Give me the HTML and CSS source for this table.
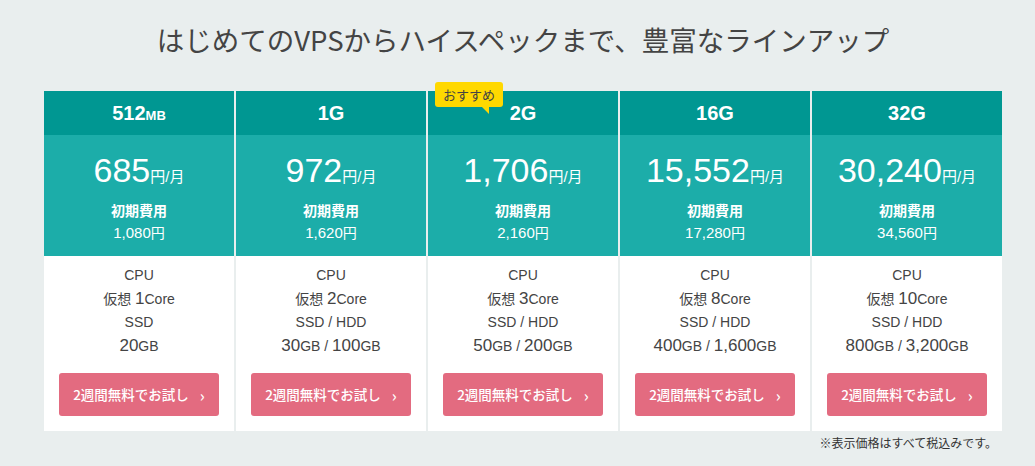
FILE: index.html
```html
<!DOCTYPE html>
<html lang="ja">
<head>
    <meta charset="UTF-8">
    <meta name="viewport" content="width=device-width, initial-scale=1.0">
    <title>VPS料金プラン</title>
    <link rel="stylesheet" href="styles.css">
</head>
<body>
    <div class="page">
        <h1 class="title">はじめてのVPSからハイスペックまで、豊富なラインアップ</h1>

        <div class="plans">
            <div class="plan">
                <div class="plan-head">512<small>MB</small></div>
                <div class="plan-price">
                    <p class="price">685<span class="unit">円/月</span></p>
                    <p class="fee-label">初期費用</p>
                    <p class="fee">1,080<span class="yen">円</span></p>
                </div>
                <div class="plan-spec">
                    <p>CPU</p>
                    <p>仮想 <span class="num">1</span>Core</p>
                    <p>SSD</p>
                    <p><span class="num">20</span>GB</p>
                    <a class="trial" href="#">2週間無料でお試し<span class="arrow">›</span></a>
                </div>
            </div>

            <div class="plan">
                <div class="plan-head">1G</div>
                <div class="plan-price">
                    <p class="price">972<span class="unit">円/月</span></p>
                    <p class="fee-label">初期費用</p>
                    <p class="fee">1,620<span class="yen">円</span></p>
                </div>
                <div class="plan-spec">
                    <p>CPU</p>
                    <p>仮想 <span class="num">2</span>Core</p>
                    <p>SSD / HDD</p>
                    <p><span class="num">30</span>GB / <span class="num">100</span>GB</p>
                    <a class="trial" href="#">2週間無料でお試し<span class="arrow">›</span></a>
                </div>
            </div>

            <div class="plan">
                <div class="plan-head">
                    2G
                    <span class="badge">おすすめ</span>
                </div>
                <div class="plan-price">
                    <p class="price">1,706<span class="unit">円/月</span></p>
                    <p class="fee-label">初期費用</p>
                    <p class="fee">2,160<span class="yen">円</span></p>
                </div>
                <div class="plan-spec">
                    <p>CPU</p>
                    <p>仮想 <span class="num">3</span>Core</p>
                    <p>SSD / HDD</p>
                    <p><span class="num">50</span>GB / <span class="num">200</span>GB</p>
                    <a class="trial" href="#">2週間無料でお試し<span class="arrow">›</span></a>
                </div>
            </div>

            <div class="plan">
                <div class="plan-head">16G</div>
                <div class="plan-price">
                    <p class="price">15,552<span class="unit">円/月</span></p>
                    <p class="fee-label">初期費用</p>
                    <p class="fee">17,280<span class="yen">円</span></p>
                </div>
                <div class="plan-spec">
                    <p>CPU</p>
                    <p>仮想 <span class="num">8</span>Core</p>
                    <p>SSD / HDD</p>
                    <p><span class="num">400</span>GB / <span class="num">1,600</span>GB</p>
                    <a class="trial" href="#">2週間無料でお試し<span class="arrow">›</span></a>
                </div>
            </div>

            <div class="plan">
                <div class="plan-head">32G</div>
                <div class="plan-price">
                    <p class="price">30,240<span class="unit">円/月</span></p>
                    <p class="fee-label">初期費用</p>
                    <p class="fee">34,560<span class="yen">円</span></p>
                </div>
                <div class="plan-spec">
                    <p>CPU</p>
                    <p>仮想 <span class="num">10</span>Core</p>
                    <p>SSD / HDD</p>
                    <p><span class="num">800</span>GB / <span class="num">3,200</span>GB</p>
                    <a class="trial" href="#">2週間無料でお試し<span class="arrow">›</span></a>
                </div>
            </div>
        </div>

        <p class="note">※表示価格はすべて税込みです。</p>
    </div>
</body>
</html>
```

FILE: styles.css
```css
body {
  margin: 0;
  background-color: #e9eeee;
  font-family: 'Liberation Sans', 'Noto Sans CJK JP', sans-serif;
  color: #444;
}

p {
  margin: 0;
}

.page {
  width: 958px;
  margin-left: 44px;
}

.title {
  margin: 19px 0 32px;
  font-family: 'Noto Sans CJK JP', sans-serif;
  font-size: 27.5px;
  font-weight: normal;
  line-height: 40px;
  text-align: center;
  color: #444;
}

.plans {
  display: grid;
  grid-template-columns: repeat(5, 190px);
  gap: 2px;
}

.plan {
  display: flex;
  flex-direction: column;
  background-color: #fff;
}

/* plan name row */
.plan-head {
  position: relative;
  height: 44px;
  line-height: 44px;
  background-color: #009792;
  color: #fff;
  font-size: 20px;
  font-weight: bold;
  text-align: center;
}

.plan-head small {
  font-size: 13px;
}

.badge {
  position: absolute;
  left: 7px;
  top: -9px;
  width: 68px;
  height: 25px;
  line-height: 25px;
  border-radius: 3px;
  background-color: #ffd800;
  color: #444;
  font-family: 'Noto Sans CJK JP', sans-serif;
  font-size: 13px;
  font-weight: normal;
}

/* little speech tail under the badge */
.badge::after {
  content: '';
  position: absolute;
  left: 47px;
  bottom: -7px;
  border-top: 7px solid #ffd800;
  border-left: 7px solid transparent;
}

/* price block */
.plan-price {
  height: 107px;
  padding-top: 14px;
  background-color: #1cada9;
  color: #fff;
  text-align: center;
}

.price {
  font-size: 34px;
  line-height: 42px;
}

.unit {
  font-size: 15px;
  line-height: 1;
}

.fee-label {
  margin-top: 9px;
  font-size: 14px;
  font-weight: bold;
  line-height: 22px;
}

.fee {
  font-size: 15px;
  line-height: 22px;
}

.yen {
  font-size: 14px;
  line-height: 1;
}

/* spec block */
.plan-spec {
  display: flex;
  flex-direction: column;
  align-items: center;
  padding: 8px 0 15px;
  font-size: 14px;
  line-height: 23.5px;
  color: #444;
}

.num {
  font-size: 17px;
  line-height: 1;
}

.trial {
  display: flex;
  align-items: center;
  justify-content: center;
  gap: 11px;
  width: 160px;
  height: 43px;
  margin-top: 15px;
  border-radius: 3px;
  background-color: #e36b80;
  color: #fff;
  font-family: 'Noto Sans CJK JP', sans-serif;
  font-size: 13.5px;
  font-weight: 500;
  text-decoration: none;
}

.arrow {
  font-size: 16px;
  line-height: 1;
}

.note {
  margin-top: 2px;
  padding-right: 5px;
  font-family: 'Noto Sans CJK JP', sans-serif;
  font-size: 12px;
  line-height: 20px;
  text-align: right;
  color: #333;
}
```
